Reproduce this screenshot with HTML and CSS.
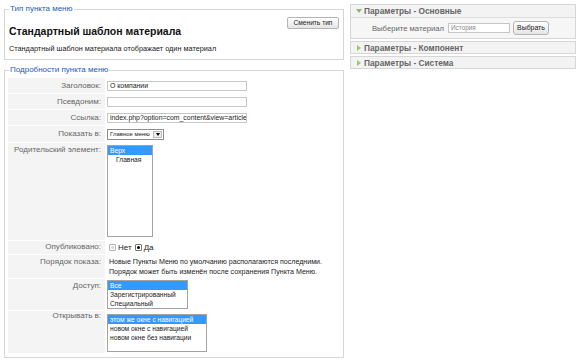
FILE: index.html
```html
<!DOCTYPE html>
<html lang="ru">
<head>
<meta charset="utf-8">
<link rel="stylesheet" href="styles.css">
</head>
<body>
<div class="page">
  <div class="col-left">
    <fieldset class="fs fs-type">
      <legend>Тип пункта меню</legend>
      <div class="type-head">
        <div class="type-title">Стандартный шаблон материала</div>
        <div class="btn btn-type">Сменить тип</div>
      </div>
      <div class="type-desc">Стандартный шаблон материала отображает один материал</div>
    </fieldset>

    <fieldset class="fs fs-details">
      <legend>Подробности пункта меню</legend>
      <div class="form">
        <div class="key k-in">Заголовок:</div>
        <div class="val v-in"><div class="input">О компании</div></div>

        <div class="key k-in">Псевдоним:</div>
        <div class="val v-in"><div class="input"></div></div>

        <div class="key k-in">Ссылка:</div>
        <div class="val v-in"><div class="input">index.php?option=com_content&amp;view=article</div></div>

        <div class="key k-in">Показать в:</div>
        <div class="val v-in"><div class="select"><span class="select-text">Главное меню</span><span class="select-btn"><span class="tri"></span></span></div></div>

        <div class="key k-parent">Родительский элемент:</div>
        <div class="val v-parent"><div class="list list-parent"><div class="opt sel">Верх</div><div class="opt indent">Главная</div></div></div>

        <div class="key k-pub">Опубликовано:</div>
        <div class="val v-pub"><span class="radio off"></span><span class="rlabel">Нет</span><span class="radio on"></span><span class="rlabel">Да</span></div>

        <div class="key k-note">Порядок показа:</div>
        <div class="val v-note">Новые Пункты Меню по умолчанию располагаются последними.<br>Порядок может быть изменён после сохранения Пункта Меню.</div>

        <div class="key k-access">Доступ:</div>
        <div class="val v-access"><div class="list list-access"><div class="opt sel">Все</div><div class="opt">Зарегистрированный</div><div class="opt">Специальный</div></div></div>

        <div class="key k-open">Открывать в:</div>
        <div class="val v-open"><div class="list list-open"><div class="opt sel">этом же окне с навигацией</div><div class="opt">новом окне с навигацией</div><div class="opt">новом окне без навигации</div></div></div>
      </div>
    </fieldset>
  </div>

  <div class="col-right">
    <div class="panel">
      <div class="panel-head open"><span class="arrow down"></span>Параметры - Основные</div>
      <div class="panel-body">
        <span class="pkey">Выберите материал</span>
        <div class="input pinput">История</div>
        <div class="btn pbtn">Выбрать</div>
      </div>
    </div>
    <div class="panel">
      <div class="panel-head"><span class="arrow right"></span>Параметры - Компонент</div>
    </div>
    <div class="panel">
      <div class="panel-head"><span class="arrow right"></span>Параметры - Система</div>
    </div>
  </div>
</div>
</body>
</html>
```

FILE: styles.css
```css
* { box-sizing: border-box; }
html, body { margin: 0; padding: 0; background: #fff; }
body {
  font-family: "Liberation Sans", Arial, sans-serif;
  font-size: 8px;
  color: #333;
}
.page {
  display: flex;
  align-items: flex-start;
  padding: 4px 4px 0 4px;
  gap: 6px;
}
.col-left {
  width: 340px;
  display: flex;
  flex-direction: column;
  gap: 5px;
}
.fs {
  margin: 0;
  border: 1px solid #d6d6d6;
  padding: 0 4px 4px 3px;
  min-width: 0;
}
.fs legend {
  color: #1f59c0;
  font-size: 8px;
  line-height: 10px;
  padding: 0 1px;
  margin-left: 1px;
}
.type-head {
  display: flex;
  justify-content: space-between;
  align-items: flex-start;
  padding-top: 3px;
}
.type-title {
  font-size: 10.5px;
  line-height: 12px;
  font-weight: bold;
  color: #111;
  padding-top: 8px;
  padding-left: 1px;
}
.btn {
  border: 1px solid #b5b5b5;
  border-radius: 2px;
  background: linear-gradient(#ffffff, #e4e4e4);
  color: #222;
  text-align: center;
  white-space: nowrap;
}
.btn-type {
  width: 52px;
  height: 12px;
  font-size: 6.6px;
  line-height: 10px;
}
.type-desc {
  font-size: 7.3px;
  line-height: 10px;
  color: #222;
  padding: 7px 0 1px 1px;
}
.form {
  display: grid;
  grid-template-columns: 97px 1fr;
  column-gap: 2px;
  row-gap: 1px;
  padding-top: 3px;
}
.key {
  background: #f4f4f4;
  color: #666;
  text-align: right;
  padding-right: 4px;
  font-size: 8px;
  line-height: 10px;
  white-space: nowrap;
}
.k-in { padding-top: 3px; }
.k-parent { padding-top: 2px; }
.k-pub { padding-top: 1px; }
.k-note { padding-top: 2px; }
.k-access { padding-top: 2px; }
.k-open { padding-top: 0; }
.v-in { padding: 3px 0 2px; }
.v-parent { padding: 2px 0 3px; }
.v-pub { padding: 3px 0 3px 2px; display: flex; align-items: center; height: 13px; }
.v-note { padding: 2px 0 1px 2px; font-size: 7.1px; line-height: 10px; color: #222; white-space: nowrap; }
.v-access { padding: 1px 0 1px; }
.v-open { padding: 3px 0 1px; }
.input {
  height: 10px;
  width: 140px;
  border: 1px solid #c6c6c6;
  background: #fff;
  font-size: 6.9px;
  line-height: 8px;
  padding: 0 2px;
  color: #222;
  white-space: nowrap;
  overflow: hidden;
}
.select {
  display: flex;
  width: 57px;
  height: 11px;
  border: 1px solid #8e8e8e;
  background: #fff;
  font-size: 6px;
  line-height: 9px;
  white-space: nowrap;
}
.select-text { flex: 1; padding-left: 2px; color: #222; overflow: hidden; }
.select-btn {
  width: 9px;
  margin: 1px;
  border: 1px solid #bbb;
  background: #eee;
  display: flex;
  align-items: center;
  justify-content: center;
}
.tri {
  width: 0; height: 0;
  border-left: 2.5px solid transparent;
  border-right: 2.5px solid transparent;
  border-top: 3px solid #000;
}
.list {
  border: 1px solid #a3a3a3;
  background: #fff;
  font-size: 6.7px;
  line-height: 9px;
  color: #222;
}
.opt { padding-left: 2px; white-space: nowrap; }
.opt.sel { background: #3399ff; color: #fff; }
.opt.indent { padding-left: 8px; }
.list-parent { width: 46px; height: 92px; }
.list-access { width: 81px; height: 29px; }
.list-open { width: 100px; height: 38px; }
.radio {
  width: 7px; height: 7px;
  border: 1px solid #b0b0b0;
  border-radius: 1px;
  background: #fff;
  display: inline-flex;
  align-items: center;
  justify-content: center;
}
.radio::after {
  content: "";
  width: 3px; height: 3px;
  border-radius: 50%;
  background: #d0d0d0;
}
.radio.on { border-color: #777; }
.radio.on::after { background: #000; }
.rlabel { margin: 0 3px 0 2px; font-size: 8px; color: #222; }
.col-right {
  width: 226px;
  display: flex;
  flex-direction: column;
  gap: 2px;
}
.panel {
  border: 1px solid #d6d6d6;
  background: #f6f6f6;
}
.panel-head {
  height: 11px;
  display: flex;
  align-items: center;
  font-size: 8.3px;
  font-weight: bold;
  color: #666;
  padding-left: 5px;
  background: #f3f3f3;
  white-space: nowrap;
}
.panel-head.open { border-bottom: 1px solid #dcdcdc; height: 13px; }
.arrow { width: 0; height: 0; }
.arrow.down {
  border-left: 3px solid transparent;
  border-right: 3px solid transparent;
  border-top: 4px solid #8dba68;
  margin-right: 2px;
}
.arrow.right {
  border-top: 3px solid transparent;
  border-bottom: 3px solid transparent;
  border-left: 4px solid #9cc872;
  margin-left: 1px;
  margin-right: 3px;
}
.panel-body {
  height: 20px;
  display: flex;
  align-items: center;
  padding-left: 20px;
}
.pkey { color: #666; font-size: 7.7px; width: 73px; text-align: right; margin-right: 4px; white-space: nowrap; }
.pinput { width: 62px; height: 10px; color: #888; font-size: 6.4px; }
.pbtn { margin-left: 3px; width: 36px; height: 14px; line-height: 12px; font-size: 6.9px; border-radius: 3px; }
```
